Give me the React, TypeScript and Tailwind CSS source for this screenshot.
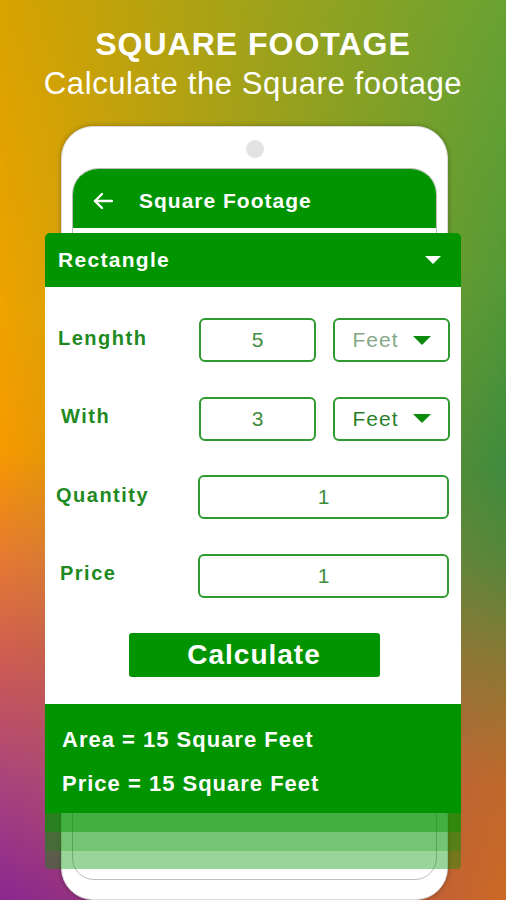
import React from 'react';

const Box = ({ value, wide }: { value: string; wide?: boolean }) => (
  <div
    className={
      (wide ? 'w-[251px] ' : 'w-[117px] ') +
      'flex h-[44px] items-center justify-center rounded-[6px] border-2 border-[#2f9a2f] bg-white text-[21px] text-[#3f8c3f]'
    }
  >
    {value}
  </div>
);

const UnitSelect = ({ muted }: { muted?: boolean }) => (
  <div className="ml-[17px] flex h-[44px] w-[117px] items-center justify-center gap-[14px] rounded-[6px] border-2 border-[#2f9a2f] bg-white">
    <span className={(muted ? 'text-[#86a886] ' : 'text-[#2a7f2a] ') + 'text-[21px] tracking-[1px]'}>Feet</span>
    <svg width="18" height="9" viewBox="0 0 18 9">
      <path d="M0 0 L18 0 L9 9 Z" fill="#0b8a0b" />
    </svg>
  </div>
);

const Label = ({ text, offset }: { text: string; offset: string }) => (
  <div className={offset + ' -mt-[5px] text-[20px] font-bold tracking-[1.5px] text-[#1f8a1f]'}>{text}</div>
);

export default function App() {
  return (
    <div className="relative h-[900px] w-full overflow-hidden bg-[linear-gradient(to_bottom,#d8a300_0%,#efa300_35%,#f79a00_50%,#e67a32_62%,#cc5a55_74%,#a9447d_87%,#8a2791_100%)] font-['Liberation_Sans',Arial,sans-serif]">
      {/* right-hand colour wash */}
      <div className="pointer-events-none absolute inset-0 bg-[linear-gradient(to_bottom,#69a232_0%,#559a36_30%,#3e8b3e_52%,#55873a_62%,#8c7834_74%,#bf692b_87%,#cc6a25_100%)] [mask-image:linear-gradient(to_right,transparent_0%,black_100%)]" />

      <div className="relative flex flex-col items-center pt-[28px] text-white">
        <h1 className="text-[32px] font-bold leading-none tracking-[1px]">SQUARE FOOTAGE</h1>
        <p className="mt-[8px] text-[31px] leading-none tracking-[0.6px]">Calculate the Square footage</p>
      </div>

      <div className="relative ml-[45px] mt-[27px] grid w-[416px]">
        {/* phone */}
        <div className="col-start-1 row-start-1 ml-[16px] mr-[13px] h-[774px] rounded-[32px] border border-[#dcdcdc] bg-white shadow-[0_0_5px_rgba(0,0,0,0.3)]">
          <div className="mx-auto mt-[13px] h-[18px] w-[18px] rounded-full bg-[#e3e3e3]" />
          <div className="mx-[10px] mt-[10px] h-[712px] overflow-hidden rounded-b-[22px] rounded-t-[26px] border border-[#bdbdbd]">
            <div className="flex h-[59px] items-center gap-[26px] bg-[#019401] pl-[20px] pt-[4px] text-white">
              <svg width="20" height="18" viewBox="0 0 20 18" fill="none" stroke="white" strokeWidth="2.4" strokeLinecap="round" strokeLinejoin="round">
                <path d="M19 9 H2" />
                <path d="M9 2 L2 9 L9 16" />
              </svg>
              <span className="text-[21px] font-bold tracking-[1px]">Square Footage</span>
            </div>
          </div>
        </div>

        {/* calculator card */}
        <div className="col-start-1 row-start-1 mt-[107px] self-start">
          <div className="flex h-[54px] items-center justify-between rounded-t-[5px] bg-[#019401] pl-[13px] pr-[20px] text-white">
            <span className="text-[21px] font-bold tracking-[1.3px]">Rectangle</span>
            <svg width="16" height="8" viewBox="0 0 16 8">
              <path d="M0 0 L16 0 L8 8 Z" fill="white" />
            </svg>
          </div>

          <div className="bg-white pb-[27px] pl-[13px] pr-[11px] pt-[31px]">
            <div className="flex flex-col gap-[34.5px]">
              <div className="flex h-[44px] items-center">
                <div className="w-[141px]">
                  <Label text="Lenghth" offset="pl-0" />
                </div>
                <Box value="5" />
                <UnitSelect muted />
              </div>
              <div className="flex h-[44px] items-center">
                <div className="w-[141px]">
                  <Label text="With" offset="pl-[3px]" />
                </div>
                <Box value="3" />
                <UnitSelect />
              </div>
              <div className="flex h-[44px] items-center">
                <div className="w-[140px]">
                  <Label text="Quantity" offset="-ml-[2px]" />
                </div>
                <Box value="1" wide />
              </div>
              <div className="flex h-[44px] items-center">
                <div className="w-[140px]">
                  <Label text="Price" offset="pl-[2px]" />
                </div>
                <Box value="1" wide />
              </div>
            </div>
            <button className="mx-auto mt-[35px] flex h-[44px] w-[251px] items-center justify-center rounded-[3px] bg-[#019401] text-[28px] font-bold tracking-[1px] text-white">
              Calculate
            </button>
          </div>

          <div className="flex h-[109px] flex-col gap-[18px] bg-[#019401] pl-[17px] pt-[23px] text-white">
            <div className="text-[22px] font-bold leading-[26px] tracking-[1px]">Area = 15 Square Feet</div>
            <div className="text-[22px] font-bold leading-[26px] tracking-[1px]">Price = 15 Square Feet</div>
          </div>
          <div className="h-[19px] bg-[#019401]/75" />
          <div className="h-[19px] bg-[#019401]/55" />
          <div className="h-[18px] rounded-b-[4px] bg-[#019401]/40" />
        </div>
      </div>
    </div>
  );
}
